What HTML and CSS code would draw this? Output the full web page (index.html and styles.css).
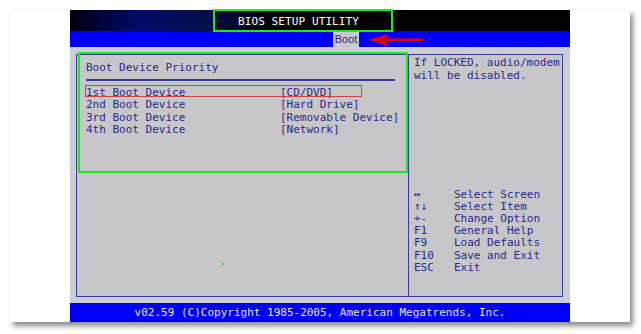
FILE: index.html
```html
<!DOCTYPE html>
<html>
<head>
<meta charset="utf-8">
<link rel="stylesheet" href="styles.css">
</head>
<body>
<div class="card">
  <div class="bios">
    <div class="titlebar"><span class="title">BIOS SETUP UTILITY</span></div>
    <div class="tabbar"><span class="tab">Boot</span></div>
    <div class="main">
      <div class="panels">
        <div class="left">
          <div class="heading">Boot Device Priority</div>
          <div class="rule"></div>
          <div class="rows">
            <span>1st Boot Device</span><span>[CD/DVD]</span>
            <span>2nd Boot Device</span><span>[Hard Drive]</span>
            <span>3rd Boot Device</span><span>[Removable Device]</span>
            <span>4th Boot Device</span><span>[Network]</span>
          </div>
        </div>
        <div class="right">
          <div class="info">If LOCKED, audio/modem<br>will be disabled.</div>
          <div class="help">
            <span>↔</span><span>Select Screen</span>
            <span>↑↓</span><span>Select Item</span>
            <span>+-</span><span>Change Option</span>
            <span>F1</span><span>General Help</span>
            <span>F9</span><span>Load Defaults</span>
            <span>F10</span><span>Save and Exit</span>
            <span>ESC</span><span>Exit</span>
          </div>
        </div>
      </div>
    </div>
    <div class="footer">v02.59 (C)Copyright 1985-2005, American Megatrends, Inc.</div>
  </div>
  <div class="mark mark-title"></div>
  <div class="mark mark-panel"></div>
  <div class="mark-row"></div>
  <div class="dot"></div>
  <svg class="arrow" width="60" height="14" viewBox="0 0 60 14">
    <polygon points="0,7 20,1 17,7 20,13" fill="#e30000"/>
    <line x1="16" y1="7" x2="54" y2="7" stroke="#e30000" stroke-width="3" stroke-linecap="round"/>
  </svg>
</div>
</body>
</html>
```

FILE: styles.css
```css
* { box-sizing: border-box; }
html, body { margin: 0; padding: 0; background: #ffffff; }
body { width: 641px; height: 334px; overflow: hidden; }

.card {
  position: relative;
  margin: 10px 0 0 10px;
  width: 620px;
  height: 312px;
  background: #ffffff;
  box-shadow: 3px 4px 5px rgba(0,0,0,0.45);
  padding-left: 60px;
}

.bios {
  width: 500px;
  height: 312px;
  display: flex;
  flex-direction: column;
  font-family: "DejaVu Sans Mono", "Liberation Mono", monospace;
  font-size: 11px;
  color: #28288e;
}

.titlebar {
  height: 21px;
  background: linear-gradient(90deg, #000010 0%, #000a6a 14%, #00104a 26%, #000000 42%, #000000 100%);
  display: flex;
  align-items: center;
  padding-left: 168px;
  padding-top: 2px;
}
.title { color: #ffffff; letter-spacing: 0.1px; }

.tabbar {
  height: 16px;
  background: #0000f6;
  display: flex;
  padding-left: 263px;
}
.tab {
  background: #c8c8d2;
  color: #2a2a8a;
  width: 26px;
  display: flex;
  align-items: center;
  justify-content: center;
  font-family: "Liberation Sans", Arial, sans-serif;
  font-size: 11px;
}

.main {
  height: 256px;
  background: #cdcdd8;
  padding: 7px 7px 6px 6px;
}
.panels {
  height: 100%;
  display: grid;
  grid-template-columns: 332px 1fr;
  border: 1px solid #3a3a9a;
  background: #c7c7c9;
}
.left {
  border-right: 1px solid #3a3a9a;
  padding: 6px 0 0 9px;
}
.heading { line-height: 13px; }
.rule {
  width: 309px;
  height: 2px;
  background: #3a3a9a;
  margin: 5px 0 6px;
}
.rows {
  display: grid;
  grid-template-columns: 194px auto;
  line-height: 12.3px;
}

.right {
  display: flex;
  flex-direction: column;
  padding: 1px 0 22px 5px;
}
.info { line-height: 13px; }
.help {
  margin-top: auto;
  display: grid;
  grid-template-columns: 40px auto;
  line-height: 12.2px;
}

.footer {
  height: 19px;
  background: #0000f6;
  color: #e4e4f4;
  display: flex;
  align-items: center;
  justify-content: center;
  padding-left: 0;
}

.mark {
  position: absolute;
  border: 2px solid #1ee81e;
}
.mark-title { left: 203px; top: -1px; width: 180px; height: 23px; }
.mark-panel { left: 68px; top: 42px; width: 330px; height: 121px; }
.mark-row {
  position: absolute;
  left: 75px; top: 75px; width: 277px; height: 12px;
  border: 1px solid #c84848;
}
.dot {
  position: absolute;
  left: 212px; top: 253px; width: 2px; height: 2px;
  background: #3cd23c;
}
.arrow { position: absolute; left: 358px; top: 23px; }
```
